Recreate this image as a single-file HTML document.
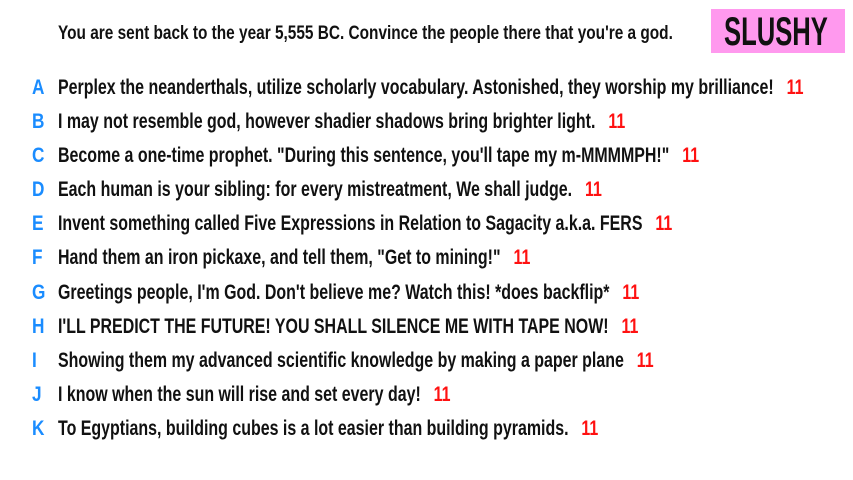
<!DOCTYPE html>
<html><head><meta charset="utf-8"><style>
body{margin:0;width:853px;height:480px;background:#fff;overflow:hidden;position:relative;font-family:"Liberation Sans Narrow","Liberation Sans",sans-serif;color:#111;font-weight:bold}
.t{position:absolute;left:58px;top:23px;font-size:19px;white-space:nowrap;transform:scaleX(.81);transform-origin:left}
.box{position:absolute;left:711px;top:9px;width:134px;height:44px;background:#ff99ee}
.box span{position:absolute;left:13px;top:1px;font-size:40px;font-weight:bold;transform:scaleX(.64);transform-origin:left;white-space:nowrap}
.r{position:absolute;left:0;font-size:21px;white-space:nowrap;height:30px}
.r b{position:absolute;left:32px;color:#1a8cff;transform:scaleX(.82);transform-origin:left}
.r i{position:absolute;left:58px;font-style:normal;transform:scaleX(.76);transform-origin:left}
.r em{color:#ff1111;font-style:normal;margin-left:17px}
</style></head><body>
<div class="t">You are sent back to the year 5,555 BC. Convince the people there that you're a god.</div>
<div class="box"><span>SLUSHY</span></div>
<div class="r" style="top:76px"><b>A</b><i>Perplex the neanderthals, utilize scholarly vocabulary. Astonished, they worship my brilliance!<em>11</em></i></div>
<div class="r" style="top:110px"><b>B</b><i>I may not resemble god, however shadier shadows bring brighter light.<em>11</em></i></div>
<div class="r" style="top:144px"><b>C</b><i>Become a one-time prophet. "During this sentence, you'll tape my m-MMMMPH!"<em>11</em></i></div>
<div class="r" style="top:178px"><b>D</b><i>Each human is your sibling: for every mistreatment, We shall judge.<em>11</em></i></div>
<div class="r" style="top:212px"><b>E</b><i>Invent something called Five Expressions in Relation to Sagacity a.k.a. FERS<em>11</em></i></div>
<div class="r" style="top:246px"><b>F</b><i>Hand them an iron pickaxe, and tell them, "Get to mining!"<em>11</em></i></div>
<div class="r" style="top:281px"><b>G</b><i>Greetings people, I'm God. Don't believe me? Watch this! *does backflip*<em>11</em></i></div>
<div class="r" style="top:315px"><b>H</b><i>I'LL PREDICT THE FUTURE! YOU SHALL SILENCE ME WITH TAPE NOW!<em>11</em></i></div>
<div class="r" style="top:349px"><b>I</b><i>Showing them my advanced scientific knowledge by making a paper plane<em>11</em></i></div>
<div class="r" style="top:383px"><b>J</b><i>I know when the sun will rise and set every day!<em>11</em></i></div>
<div class="r" style="top:417px"><b>K</b><i>To Egyptians, building cubes is a lot easier than building pyramids.<em>11</em></i></div>
</body></html>
